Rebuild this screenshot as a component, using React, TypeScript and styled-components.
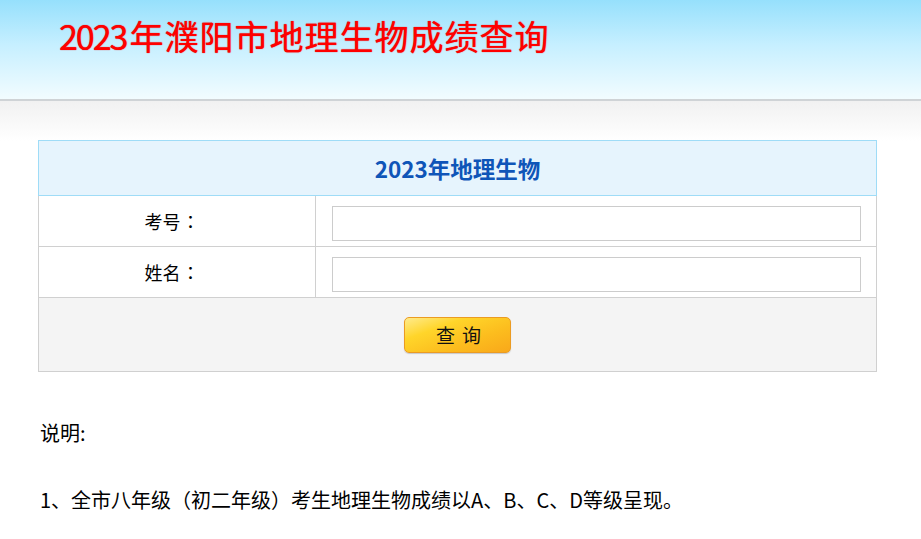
import React from 'react';
import styled, { createGlobalStyle } from 'styled-components';

const GlobalStyle = createGlobalStyle`
  html, body {
    margin: 0;
    padding: 0;
    background: #fff;
    font-family: "Noto Sans CJK SC", "Noto Sans", sans-serif;
    color: #000;
  }
`;

const Header = styled.header`
  height: 101px;
  border-bottom: 2px solid #cfd3d6;
  background: linear-gradient(to bottom, #96e0fc 0%, #c6efff 45%, #f2fcff 100%);
  padding: 19px 0 0 59px;
  box-sizing: border-box;
`;

const SiteTitle = styled.h1`
  margin: 0;
  font-size: 34px;
  font-weight: 400;
  letter-spacing: 1px;
  color: #ff0000;
  text-shadow: 0 0 1px #e00000;
  line-height: 1;
`;

const Year = styled.span`
  letter-spacing: -2px;
  margin-right: 3px;
`;

const Main = styled.main`
  background: linear-gradient(to bottom, #f1f1f1 0px, #ffffff 40px);
  padding: 39px 44px 0 38px;
`;

const Form = styled.div`
  width: 839px;
  box-sizing: border-box;
`;

const Caption = styled.div`
  height: 56px;
  box-sizing: border-box;
  border: 1px solid #9fdcf7;
  background: #e6f4fd;
  display: flex;
  align-items: center;
  justify-content: center;
  font-size: 22.5px;
  font-weight: 700;
  color: #0f55b8;
`;

const Row = styled.div`
  display: grid;
  grid-template-columns: 277px 1fr;
  height: 51px;
  border: 1px solid #d0d0d0;
  border-top: none;
  box-sizing: border-box;
`;

const Label = styled.div`
  display: flex;
  align-items: center;
  justify-content: center;
  padding-right: 10px;
  font-size: 18px;
  border-right: 1px solid #d0d0d0;
`;

const Colon = styled.span`
  font-family: "Noto Sans CJK TC", sans-serif;
  margin-left: 1px;
`;

const Field = styled.div`
  padding: 10px 15px 0 16px;
`;

const Input = styled.input`
  display: block;
  width: 100%;
  height: 35px;
  box-sizing: border-box;
  border: 1px solid #cccccc;
  outline: none;
`;

const Actions = styled.div`
  height: 74px;
  box-sizing: border-box;
  border: 1px solid #d0d0d0;
  border-top: none;
  background: #f4f4f4;
  display: flex;
  align-items: center;
  justify-content: center;
`;

const QueryButton = styled.button`
  width: 107px;
  height: 36px;
  border: 1px solid #eb9b22;
  border-radius: 5px;
  background: linear-gradient(160deg, #ffeb8c 0%, #ffd52a 30%, #fcbd1e 65%, #f9a81a 100%);
  box-shadow: 0 1px 1px rgba(0, 0, 0, 0.18);
  font-family: "Noto Sans CJK SC", sans-serif;
  font-size: 19px;
  color: #111;
  letter-spacing: 7px;
  padding: 0 0 0 9px;
  cursor: pointer;
`;

const Notes = styled.div`
  padding: 46px 2px 0;
  font-size: 20px;
  line-height: 30px;
`;

const Note = styled.p`
  margin: 0 0 37px;
`;

export default function App() {
  return (
    <>
      <GlobalStyle />
      <Header>
        <SiteTitle>
          <Year>2023</Year>年濮阳市地理生物成绩查询
        </SiteTitle>
      </Header>
      <Main>
        <Form>
          <Caption>2023年地理生物</Caption>
          <Row>
            <Label>
              考号<Colon>：</Colon>
            </Label>
            <Field>
              <Input type="text" />
            </Field>
          </Row>
          <Row>
            <Label>
              姓名<Colon>：</Colon>
            </Label>
            <Field>
              <Input type="text" />
            </Field>
          </Row>
          <Actions>
            <QueryButton type="button">查询</QueryButton>
          </Actions>
        </Form>
        <Notes>
          <Note>说明:</Note>
          <Note>1、全市八年级（初二年级）考生地理生物成绩以A、B、C、D等级呈现。</Note>
        </Notes>
      </Main>
    </>
  );
}
